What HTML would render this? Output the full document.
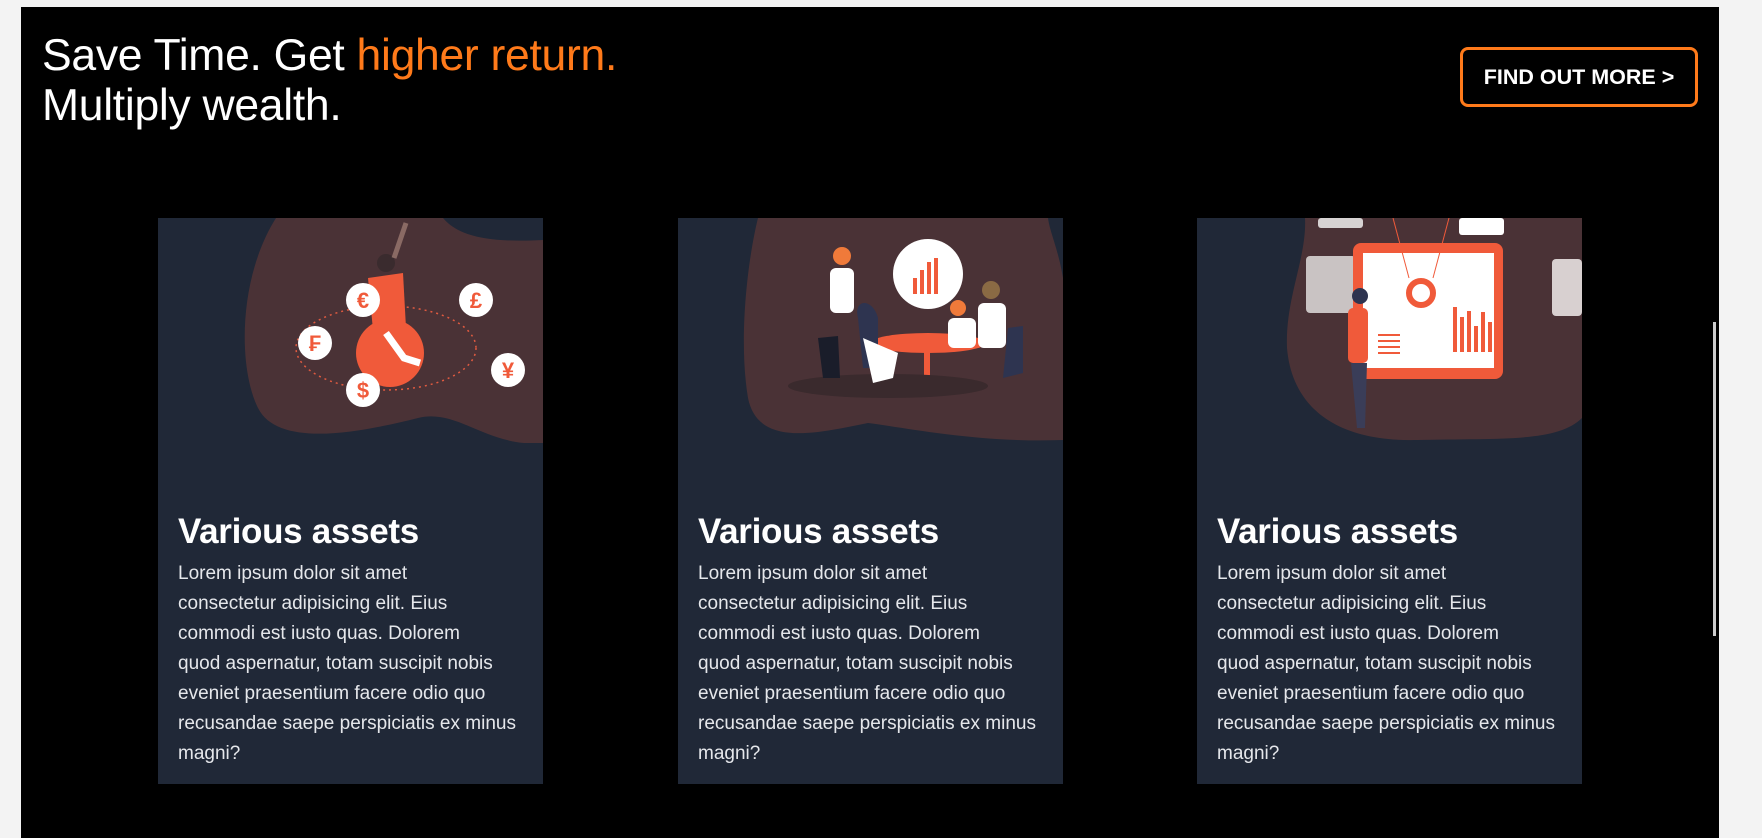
<!DOCTYPE html>
<html><head><meta charset="utf-8"><style>
html,body{margin:0;padding:0;width:1762px;height:838px;overflow:hidden;background:#f3f3f3;font-family:"Liberation Sans",sans-serif}
.main{position:absolute;left:21px;top:7px;width:1698px;height:831px;background:#000}
h1{position:absolute;left:21px;top:24px;margin:0;font-weight:normal;font-size:44.5px;line-height:50px;color:#fff;letter-spacing:-0.3px}
h1 span{color:#ff7a1a}
.btn{position:absolute;left:1439px;top:40px;width:232px;height:54px;border:3px solid #ff7a1a;border-radius:8px;color:#fff;font-weight:bold;font-size:21.5px;line-height:54px;text-align:center;white-space:nowrap}
.card{position:absolute;top:211px;width:385px;height:566px;background:#202837;overflow:hidden}
.card svg{position:absolute;left:0;top:0}
.card h2{position:absolute;left:20px;top:294px;margin:0;color:#fff;font-size:35px;font-weight:bold;letter-spacing:-0.3px}
.card p{position:absolute;left:20px;top:341px;width:360px;margin:0;color:#e5e7eb;font-size:19px;line-height:30px;white-space:nowrap}
.sb{position:absolute;left:1713px;top:322px;width:3px;height:314px;background:#ccc}
</style></head><body>
<div class="main">
<h1>Save Time. Get <span>higher return.</span><br>Multiply wealth.</h1>
<div class="btn">FIND OUT MORE &gt;</div>

<div class="card" style="left:137px">
<svg width="385" height="225" viewBox="0 0 385 225">
<path d="M118 0 L385 0 L385 225 C330 230 300 190 260 200 C200 215 120 230 100 190 C80 150 80 60 118 0Z" fill="#4a3236"/>
<path d="M285 0 C300 18 330 25 385 22 L385 0Z" fill="#202837"/>
<ellipse cx="228" cy="130" rx="90" ry="42" fill="none" stroke="#e05a40" stroke-dasharray="2 4" stroke-width="1.5"/>
<circle cx="232" cy="135" r="34" fill="#f05a3a"/>
<path d="M210 60 L245 55 L248 110 L215 112Z" fill="#f05a3a"/>
<circle cx="228" cy="45" r="9" fill="#3a2b2e"/>
<path d="M236 40 L248 5" stroke="#8a6a64" stroke-width="5"/>
<path d="M228 115 L246 140 L262 145" stroke="#fff" stroke-width="7" fill="none"/>
<g font-family="Liberation Sans" font-weight="bold" fill="#f05a3a" text-anchor="middle">
<circle cx="205" cy="82" r="17" fill="#fff"/><text x="205" y="90" font-size="22">€</text>
<circle cx="318" cy="82" r="17" fill="#fff"/><text x="318" y="90" font-size="22">£</text>
<circle cx="157" cy="125" r="17" fill="#fff"/><text x="157" y="133" font-size="22">₣</text>
<circle cx="350" cy="152" r="17" fill="#fff"/><text x="350" y="160" font-size="22">¥</text>
<circle cx="205" cy="172" r="17" fill="#fff"/><text x="205" y="180" font-size="22">$</text>
</g>
</svg>
<h2>Various assets</h2>
<p>Lorem ipsum dolor sit amet<br>consectetur adipisicing elit. Eius<br>commodi est iusto quas. Dolorem<br>quod aspernatur, totam suscipit nobis<br>eveniet praesentium facere odio quo<br>recusandae saepe perspiciatis ex minus<br>magni?</p>
</div>

<div class="card" style="left:657px">
<svg width="385" height="225" viewBox="0 0 385 225">
<path d="M80 0 L385 0 L385 222 C300 225 230 210 190 205 C140 215 80 230 70 180 C60 120 70 40 80 0Z" fill="#4a3236"/>
<path d="M370 0 L385 0 L385 60 C380 30 372 15 370 0Z" fill="#202837"/>
<circle cx="250" cy="56" r="35" fill="#fff"/>
<g fill="#f05a3a"><rect x="235" y="60" width="4" height="16"/><rect x="242" y="52" width="4" height="24"/><rect x="249" y="44" width="4" height="32"/><rect x="256" y="40" width="4" height="36"/></g>
<ellipse cx="250" cy="125" rx="58" ry="10" fill="#f05a3a"/>
<rect x="246" y="130" width="6" height="40" fill="#f05a3a"/>
<ellipse cx="210" cy="168" rx="100" ry="12" fill="#3a2a2d"/>
<rect x="152" y="50" width="24" height="45" rx="6" fill="#fff"/><circle cx="164" cy="38" r="9" fill="#f07a3a"/>
<path d="M180 100 C175 80 195 80 200 100 L200 150 L185 150Z" fill="#2e3450"/>
<path d="M185 120 L220 135 L215 160 L195 165Z" fill="#fff"/>
<rect x="300" y="85" width="28" height="45" rx="6" fill="#fff"/><circle cx="313" cy="72" r="9" fill="#8a6a44"/>
<rect x="270" y="100" width="28" height="30" rx="6" fill="#fff"/><circle cx="280" cy="90" r="8" fill="#f07a3a"/>
<path d="M140 120 L160 118 L162 160 L145 160Z" fill="#1a1d2a"/>
<path d="M330 110 L345 108 L345 155 L325 160Z" fill="#2e3450"/>
</svg>
<h2>Various assets</h2>
<p>Lorem ipsum dolor sit amet<br>consectetur adipisicing elit. Eius<br>commodi est iusto quas. Dolorem<br>quod aspernatur, totam suscipit nobis<br>eveniet praesentium facere odio quo<br>recusandae saepe perspiciatis ex minus<br>magni?</p>
</div>

<div class="card" style="left:1176px">
<svg width="385" height="225" viewBox="0 0 385 225">
<path d="M108 0 L385 0 L385 200 C360 225 300 220 220 222 C140 224 95 190 90 130 C88 80 110 40 108 0Z" fill="#4a3236"/>
<rect x="121" y="0" width="45" height="10" rx="3" fill="#d6d2d2"/>
<rect x="262" y="0" width="45" height="17" rx="3" fill="#fff"/>
<rect x="109" y="38" width="50" height="57" rx="4" fill="#c9c3c3"/>
<rect x="355" y="41" width="30" height="57" rx="4" fill="#d8d0d0"/>
<rect x="156" y="25" width="150" height="136" rx="8" fill="#f05a3a"/>
<rect x="166" y="35" width="131" height="115" fill="#fff"/>
<path d="M196 0 L212 60 M252 0 L236 60" stroke="#f05a3a" stroke-width="1"/>
<circle cx="224" cy="75" r="12" fill="none" stroke="#f05a3a" stroke-width="6"/>
<g fill="#f05a3a"><rect x="256" y="89" width="4" height="45"/><rect x="263" y="99" width="4" height="35"/><rect x="270" y="93" width="4" height="41"/><rect x="277" y="108" width="4" height="26"/><rect x="284" y="94" width="4" height="40"/><rect x="291" y="104" width="4" height="30"/><rect x="298" y="99" width="4" height="35"/>
<rect x="181" y="116" width="22" height="2"/><rect x="181" y="122" width="22" height="2"/><rect x="181" y="128" width="22" height="2"/><rect x="181" y="134" width="22" height="2"/></g>
<rect x="151" y="90" width="20" height="55" rx="5" fill="#f05a3a"/>
<circle cx="163" cy="78" r="8" fill="#2e3450"/>
<path d="M154 145 L170 145 L168 210 L160 210Z" fill="#3a3d58"/>
</svg>
<h2>Various assets</h2>
<p>Lorem ipsum dolor sit amet<br>consectetur adipisicing elit. Eius<br>commodi est iusto quas. Dolorem<br>quod aspernatur, totam suscipit nobis<br>eveniet praesentium facere odio quo<br>recusandae saepe perspiciatis ex minus<br>magni?</p>
</div>
</div>
<div class="sb"></div>
</body></html>
